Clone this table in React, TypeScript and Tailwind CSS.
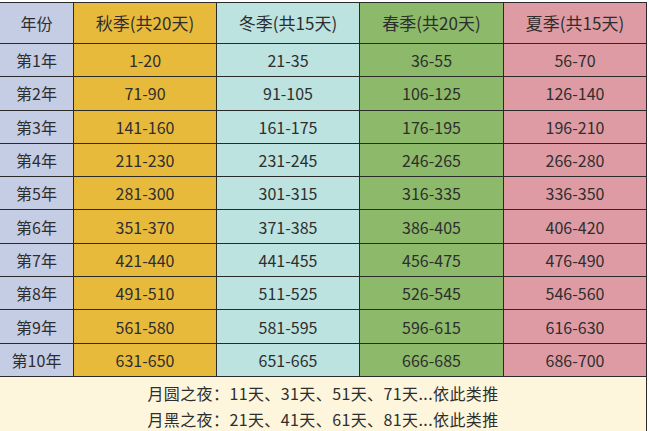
const seasons = [
  { title: "秋季(共20天)", bg: "bg-[#e8ba3c]" },
  { title: "冬季(共15天)", bg: "bg-[#bce3df]" },
  { title: "春季(共20天)", bg: "bg-[#8cb96a]" },
  { title: "夏季(共15天)", bg: "bg-[#de9ba4]" },
];

const rows = [
  ["1-20", "21-35", "36-55", "56-70"],
  ["71-90", "91-105", "106-125", "126-140"],
  ["141-160", "161-175", "176-195", "196-210"],
  ["211-230", "231-245", "246-265", "266-280"],
  ["281-300", "301-315", "316-335", "336-350"],
  ["351-370", "371-385", "386-405", "406-420"],
  ["421-440", "441-455", "456-475", "476-490"],
  ["491-510", "511-525", "526-545", "546-560"],
  ["561-580", "581-595", "596-615", "616-630"],
  ["631-650", "651-665", "666-685", "686-700"],
];

export default function App() {
  return (
    <div
      className="w-[649px] h-[431px] overflow-hidden bg-white pt-[2px] text-[#2e2e2e]"
      style={{ fontFamily: '"Noto Sans CJK SC", "Noto Sans", sans-serif' }}
    >
      <div className="w-[647px] border-t border-r border-[#2a2a2a] bg-[#2a2a2a]">
        <div className="grid grid-cols-[73px_142px_142px_143px_142px] gap-px">
          <div className="h-[40px] bg-[#c5cde5] flex items-center justify-center text-[16px]">年份</div>
          {seasons.map((s) => (
            <div key={s.title} className={`h-[40px] ${s.bg} flex items-center justify-center text-[17px]`}>
              {s.title}
            </div>
          ))}
          {rows.map((r, i) => (
            <>
              <div key={`y${i}`} className="h-[32.3px] bg-[#c5cde5] flex items-center justify-center text-[16px]">
                第{i + 1}年
              </div>
              {r.map((v, j) => (
                <div
                  key={`${i}-${j}`}
                  className={`h-[32.3px] ${seasons[j].bg} flex items-center justify-center text-[16px]`}
                >
                  {v}
                </div>
              ))}
            </>
          ))}
        </div>
        <div className="mt-px h-[60px] bg-[#fdf6dd] flex flex-col items-center pt-[3px] text-[16px] leading-[26px] tracking-[0.4px]">
          <div>月圆之夜：11天、31天、51天、71天...依此类推</div>
          <div>月黑之夜：21天、41天、61天、81天...依此类推</div>
        </div>
      </div>
    </div>
  );
}
